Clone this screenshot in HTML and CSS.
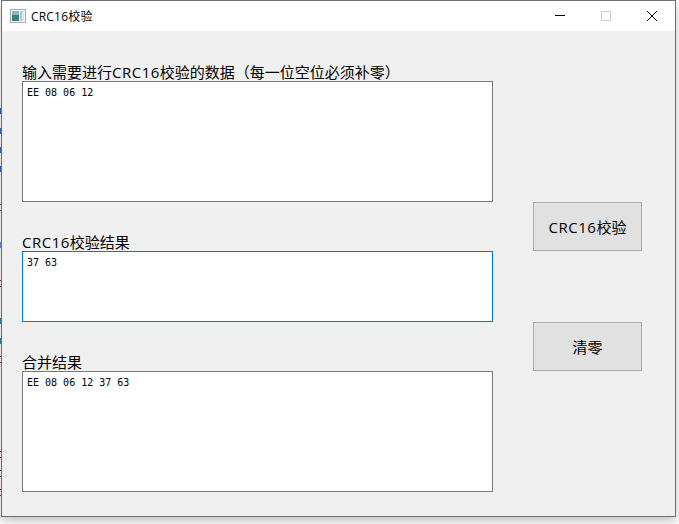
FILE: index.html
```html
<!DOCTYPE html>
<html lang="zh-CN">
<head>
    <meta charset="UTF-8">
    <meta name="viewport" content="width=device-width, initial-scale=1.0">
    <title>CRC16校验</title>
    <link rel="stylesheet" href="styles.css">
</head>
<body>
    <div class="desktop-edge"></div>
    <div class="window">
        <div class="titlebar">
            <svg class="app-icon" viewBox="0 0 16 14" xmlns="http://www.w3.org/2000/svg">
                <rect x="0.5" y="0.5" width="15" height="13" fill="#f4f6f6" stroke="#a9adad"></rect>
                <rect x="2" y="2" width="7" height="10" fill="#3f7f7a"></rect>
                <rect x="2" y="2" width="7" height="4" fill="#8fb4c4"></rect>
                <rect x="10" y="2" width="2" height="10" fill="#a8cfc0"></rect>
                <rect x="12" y="2" width="2" height="10" fill="#d9e2e4"></rect>
            </svg>
            <span class="title-text">CRC16校验</span>
            <div class="controls">
                <div class="control">
                    <svg class="control-icon" viewBox="0 0 12 12" xmlns="http://www.w3.org/2000/svg">
                        <path d="M1 5.5H11" stroke="#000"></path>
                    </svg>
                </div>
                <div class="control">
                    <svg class="control-icon" viewBox="0 0 12 12" xmlns="http://www.w3.org/2000/svg">
                        <rect x="1.5" y="1.5" width="9" height="9" fill="none" stroke="#ccc"></rect>
                    </svg>
                </div>
                <div class="control">
                    <svg class="control-icon" viewBox="0 0 12 12" xmlns="http://www.w3.org/2000/svg">
                        <path d="M1 1L11 11M11 1L1 11" stroke="#000"></path>
                    </svg>
                </div>
            </div>
        </div>
        <div class="client">
            <div class="fields">
                <div class="field">
                    <label class="field-label">输入需要进行<span class="latin">CRC16</span>校验的数据（每一位空位必须补零）</label>
                    <textarea class="box box-tall" spellcheck="false">EE 08 06 12</textarea>
                </div>
                <div class="field">
                    <label class="field-label"><span class="latin">CRC16</span>校验结果</label>
                    <textarea class="box box-short box-focus" spellcheck="false">37 63</textarea>
                </div>
                <div class="field">
                    <label class="field-label">合并结果</label>
                    <textarea class="box box-tall" spellcheck="false">EE 08 06 12 37 63</textarea>
                </div>
            </div>
            <div class="actions">
                <button class="action-btn" type="button"><span class="latin">CRC16</span>校验</button>
                <button class="action-btn" type="button">清零</button>
            </div>
        </div>
    </div>
</body>
</html>
```

FILE: styles.css
```css
body {
    margin: 0;
    height: 524px;
    overflow: hidden;
    background-color: #ffffff;
    font-family: "Open Sans", "Noto Sans CJK SC", sans-serif;
}
/* sliver of the desktop showing left of the window */
.desktop-edge {
    position: absolute;
    left: 0;
    top: 100px;
    width: 1px;
    height: 400px;
    background-image: linear-gradient(to bottom,
        transparent 8px, #2a62b0 8px, #2a62b0 14px, transparent 14px,
        transparent 28px, #2a62b0 28px, #2a62b0 34px, transparent 34px,
        transparent 47px, #2a62b0 47px, #2a62b0 53px, transparent 53px,
        transparent 66px, #2a62b0 66px, #2a62b0 72px, transparent 72px,
        transparent 104px, #6f7a10 104px, #6f7a10 105px, transparent 105px,
        transparent 110px, #6f7a10 110px, #6f7a10 111px, transparent 111px,
        transparent 142px, #5a82c0 142px, #5a82c0 148px, transparent 148px,
        transparent 180px, #8b1a1a 180px, #8b1a1a 181px, transparent 181px,
        transparent 186px, #8b1a1a 186px, #8b1a1a 187px, transparent 187px,
        transparent 218px, #2a7a9a 218px, #2a7a9a 224px, transparent 224px,
        transparent 238px, #2a7a9a 238px, #2a7a9a 244px, transparent 244px,
        transparent 256px, #8b1a1a 256px, #8b1a1a 257px, transparent 257px,
        transparent 262px, #8b1a1a 262px, #8b1a1a 263px, transparent 263px,
        transparent 351px, #8b1a1a 351px, #8b1a1a 352px, transparent 352px,
        transparent 357px, #8b1a1a 357px, #8b1a1a 358px, transparent 358px,
        transparent 370px, #8b1a1a 370px, #8b1a1a 371px, transparent 371px,
        transparent 376px, #8b1a1a 376px, #8b1a1a 377px, transparent 377px,
        transparent 389px, #8b1a1a 389px, #8b1a1a 390px, transparent 390px,
        transparent 395px, #8b1a1a 395px, #8b1a1a 396px, transparent 396px);
}
.window {
    box-sizing: border-box;
    width: 675px;
    height: 517px;
    margin-left: 1px;
    border: 1px solid #6f6f6f;
    background-color: #f0f0f0;
    box-shadow: 0 4px 10px rgba(0, 0, 0, 0.25);
    display: flex;
    flex-direction: column;
}
.titlebar {
    height: 30px;
    background-color: #ffffff;
    display: flex;
    align-items: center;
    padding-left: 8px;
}
.app-icon {
    width: 16px;
    height: 14px;
}
.title-text {
    margin-left: 5px;
    font-size: 12px;
    color: #000000;
    letter-spacing: 0.2px;
}
.controls {
    margin-left: auto;
    display: flex;
}
.control {
    width: 46px;
    height: 30px;
    display: flex;
    align-items: center;
    justify-content: center;
}
.control-icon {
    width: 12px;
    height: 12px;
}
.client {
    flex: 1;
    display: flex;
    padding-left: 20px;
}
.fields {
    width: 471px;
    padding-top: 34px;
    display: flex;
    flex-direction: column;
    gap: 33px;
}
.field {
    display: flex;
    flex-direction: column;
}
.field-label {
    height: 16px;
    line-height: 14px;
    font-size: 15px;
    color: #000000;
    white-space: nowrap;
}
.latin {
    letter-spacing: 0.5px;
}
.box {
    box-sizing: border-box;
    display: block;
    width: 471px;
    margin: 0;
    padding: 5px 4px;
    border: 1px solid #7a7a7a;
    border-radius: 0;
    outline: none;
    resize: none;
    overflow: hidden;
    background-color: #ffffff;
    font-family: "DejaVu Sans Mono", monospace;
    font-size: 10px;
    line-height: 12px;
    color: #000000;
}
.box-tall {
    height: 121px;
}
.box-short {
    height: 71px;
}
.box-focus {
    border-color: #0078d7;
}
.actions {
    margin-left: 40px;
    padding-top: 171px;
    display: flex;
    flex-direction: column;
    gap: 71px;
}
.action-btn {
    box-sizing: border-box;
    width: 109px;
    height: 49px;
    padding: 0;
    border: 1px solid #adadad;
    background-color: #e1e1e1;
    font-family: "Open Sans", "Noto Sans CJK SC", sans-serif;
    font-size: 15px;
    color: #000000;
}
```
